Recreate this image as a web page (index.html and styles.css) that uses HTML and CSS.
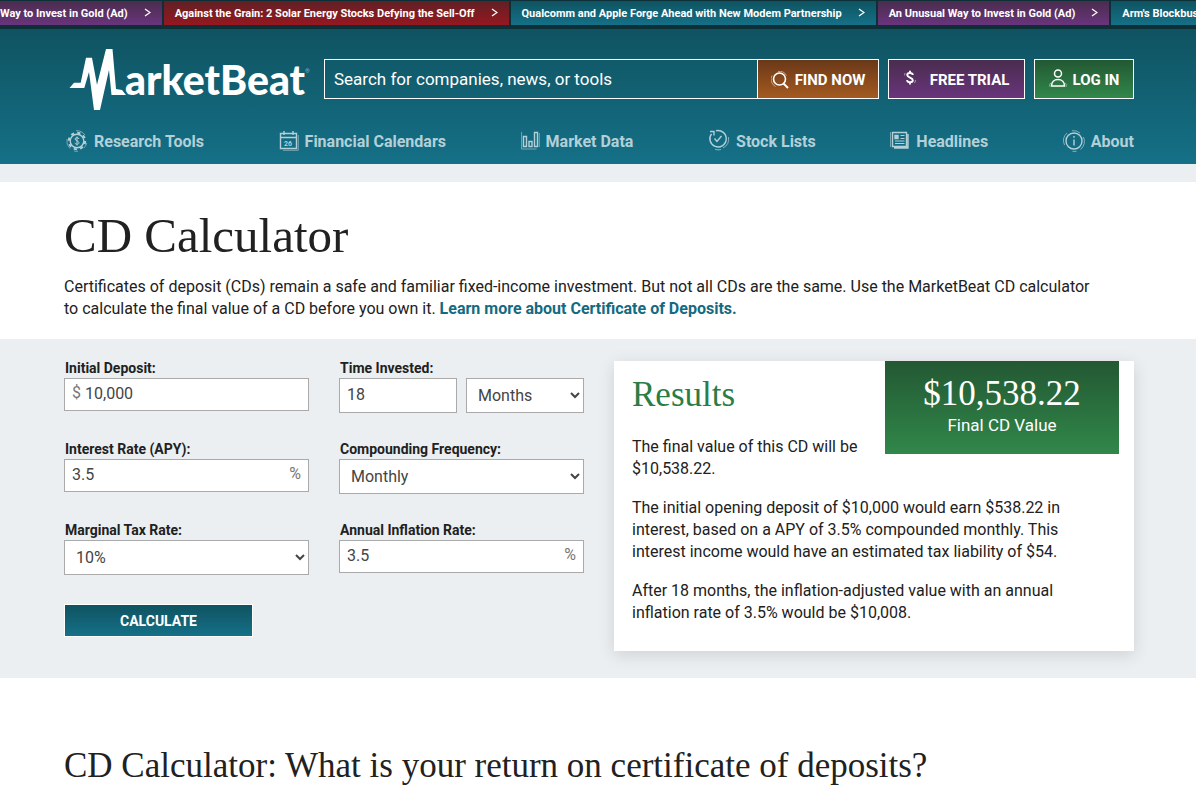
FILE: index.html
```html
<!DOCTYPE html>
<html lang="en">
<head>
<meta charset="UTF-8">
<meta name="viewport" content="width=device-width, initial-scale=1.0">
<title>CD Calculator</title>
<link rel="stylesheet" href="styles.css">
</head>
<body>

<div class="ticker">
    <a class="ticker-item purple first" href="#">Way to Invest in Gold (Ad) <svg width="7" height="9" viewBox="0 0 7 9"><path d="M1 1l5 3.5L1 8"/></svg></a>
    <a class="ticker-item red" href="#">Against the Grain: 2 Solar Energy Stocks Defying the Sell-Off <svg width="7" height="9" viewBox="0 0 7 9"><path d="M1 1l5 3.5L1 8"/></svg></a>
    <a class="ticker-item teal" href="#">Qualcomm and Apple Forge Ahead with New Modem Partnership <svg width="7" height="9" viewBox="0 0 7 9"><path d="M1 1l5 3.5L1 8"/></svg></a>
    <a class="ticker-item purple" href="#">An Unusual Way to Invest in Gold (Ad) <svg width="7" height="9" viewBox="0 0 7 9"><path d="M1 1l5 3.5L1 8"/></svg></a>
    <a class="ticker-item teal" href="#">Arm's Blockbuster</a>
</div>

<header class="header">
    <div class="header-top">
        <a class="logo" href="#">
            <svg width="242" height="62" viewBox="0 0 242 62">
                <path fill="#fff" d="M1.500 40L6 34.700h6.700L18 9.700h6l5 27L38 1h6.500L48 41l6 1 4 5H43.500L41 22 32 62h-6L21 24l-4.700 16z"/>
                <text class="logo-text" x="57" y="47">arketBeat</text>
                <text class="logo-mark" x="237" y="25">®</text>
            </svg>
        </a>
        <form class="search">
            <input class="search-input" type="text" aria-label="Search" placeholder="Search for companies, news, or tools">
            <button class="search-button" type="button">
                <svg width="18" height="18" viewBox="0 0 18 18" fill="none" stroke="#fff"><circle cx="8.500" cy="8" r="6" stroke-width="1.600"/><path d="M12.500 12.500l4.500 4.500" stroke-width="2"/><path d="M1 4.500a8 8 0 0 0 3.500 11M7 .5a8 8 0 0 1 8.500 4" stroke-width=".7" opacity=".7"/></svg>
                FIND NOW
            </button>
        </form>
        <a class="button trial" href="#">
            <svg width="12" height="16" viewBox="0 0 12 16" fill="none" stroke="#fff"><path d="M8.800 5C8.500 2.300 3.200 2.300 3.200 5S8.800 7.500 8.800 10.200 3.400 13 3 10.200M6 .8v2.500M6 12v2.500" stroke-width="1.900"/><path d="M1 3a6 6 0 0 0-.3 2.500M11.500 10a6 6 0 0 1-1 3" stroke-width=".7" opacity=".7"/></svg>
            FREE TRIAL
        </a>
        <a class="button login" href="#">
            <svg width="18" height="19" viewBox="0 0 18 19" fill="none" stroke="#fff"><circle cx="9" cy="4.500" r="3.500" stroke-width="1.500"/><path d="M2.500 17c0-4 2.700-6.500 6.500-6.500s6.500 2.500 6.500 6.500z" stroke-width="1.500"/><path d="M.6 17.500c0-1.500.3-2.500 1-3.500M17.400 17.500c0-1.500-.3-2.500-1-3.500" stroke-width=".7" opacity=".7"/></svg>
            LOG IN
        </a>
    </div>
    <nav class="nav">
        <a class="nav-link" href="#">
            <svg width="22" height="22" viewBox="0 0 22 22"><circle cx="11" cy="11" r="6.800"/><circle cx="11" cy="11" r="8.200" stroke-width="2" stroke-dasharray="3.200 3.240"/><path d="M13 9c0-1.800-4-1.800-4 0s4 1.800 4 3.800-4 1.800-4 0M11 6.500v9" stroke-width="1"/><path d="M10 .7A10.300 10.300 0 0 1 19 5M1 9a10.300 10.300 0 0 0 3 9.500M8 21a10.300 10.300 0 0 0 4 .2M20.800 13a10 10 0 0 1-3 5" stroke-width=".6"/></svg>
            Research Tools
        </a>
        <a class="nav-link" href="#">
            <svg width="20" height="20" viewBox="0 0 20 20"><path d="M1.500 2.500h16v15h-16zM1.500 6.500h16M5 0v4M14 0v4"/><path d="M19.300 4v15.300H4" stroke-width=".6"/><text class="icon-text" x="5" y="15">26</text></svg>
            Financial Calendars
        </a>
        <a class="nav-link" href="#">
            <svg width="19" height="20" viewBox="0 0 19 20"><path d="M2.500 5.500h3v10h-3zM8 10.500h3v5H8zM13.500 1.500h3v14h-3z"/><path d="M.6 1v17h15M18.300 2v14" stroke-width=".6"/></svg>
            Market Data
        </a>
        <a class="nav-link raised" href="#">
            <svg width="22" height="22" viewBox="0 0 22 22"><path d="M8 1.800a8.200 8.200 0 1 1-4.500 3M2 2.500h4v4M6.500 9.500l2.500 3 4.500-5.500"/><path d="M20.500 8a10.500 10.500 0 0 1-5.500 11M13 20.500a9 9 0 0 1-6-.2" stroke-width=".7"/></svg>
            Stock Lists
        </a>
        <a class="nav-link" href="#">
            <svg width="20" height="20" viewBox="0 0 20 20"><path d="M2.500 1.500h14v14h-14zM18 3v14H4"/><path d="M5 4.500h3v3H5z" fill="#b3d0d8"/><path d="M10.500 4.500h4M10.500 7.500h4M5 10h9.500M5 12.500h9.500" stroke-width="1"/><path d="M.5 1v15" stroke-width=".6"/></svg>
            Headlines
        </a>
        <a class="nav-link" href="#">
            <svg width="22" height="22" viewBox="0 0 22 22"><circle cx="11" cy="11" r="8"/><path d="M11 9.500v6M11 6v1.800"/><path d="M4 3a10.500 10.500 0 0 0-2.500 12M9 .7A10.500 10.500 0 0 1 17 3M20.500 7a10.500 10.500 0 0 1-3 12.500M9.500 21.300h4" stroke-width=".7"/></svg>
            About
        </a>
    </nav>
</header>

<main>
    <section class="intro">
        <h1>CD Calculator</h1>
        <p>Certificates of deposit (CDs) remain a safe and familiar fixed-income investment. But not all CDs are the same. Use the MarketBeat CD calculator<br> to calculate the final value of a CD before you own it. <a href="#">Learn more about Certificate of Deposits.</a></p>
    </section>

    <section class="calculator">
        <form class="fields">
            <div class="field">
                <label for="deposit">Initial Deposit:</label>
                <div class="input-box">
                    <span class="unit">$</span>
                    <input id="deposit" type="text" value="10,000">
                </div>
            </div>
            <div class="field">
                <label for="time">Time Invested:</label>
                <div class="pair">
                    <input class="time-input" id="time" type="text" value="18">
                    <select aria-label="Time unit"><option>Months</option></select>
                </div>
            </div>
            <div class="field">
                <label for="rate">Interest Rate (APY):</label>
                <div class="input-box">
                    <input id="rate" type="text" value="3.5">
                    <span class="unit">%</span>
                </div>
            </div>
            <div class="field">
                <label for="frequency">Compounding Frequency:</label>
                <select id="frequency"><option>Monthly</option></select>
            </div>
            <div class="field">
                <label for="tax">Marginal Tax Rate:</label>
                <select id="tax"><option>10%</option></select>
            </div>
            <div class="field">
                <label for="inflation">Annual Inflation Rate:</label>
                <div class="input-box">
                    <input id="inflation" type="text" value="3.5">
                    <span class="unit">%</span>
                </div>
            </div>
            <button class="calculate" type="button">CALCULATE</button>
        </form>

        <div class="results">
            <div class="final-value">
                <strong>$10,538.22</strong>
                <span>Final CD Value</span>
            </div>
            <h2>Results</h2>
            <p>The final value of this CD will be $10,538.22.</p>
            <p>The initial opening deposit of $10,000 would earn $538.22 in interest, based on a APY of 3.5% compounded monthly. This interest income would have an estimated tax liability of $54.</p>
            <p>After 18 months, the inflation-adjusted value with an annual inflation rate of 3.5% would be $10,008.</p>
        </div>
    </section>

    <section class="article">
        <h2>CD Calculator: What is your return on certificate of deposits?</h2>
    </section>
</main>

</body>
</html>
```
FILE: styles.css
```css
* {
    box-sizing: border-box;
}
body {
    margin: 0;
    font-family: Roboto, "Liberation Sans", sans-serif;
    font-size: 16px;
    line-height: 22px;
    color: #212121;
    background: #fff;
    overflow-x: hidden;
}
a {
    text-decoration: none;
}
h1, h2 {
    font-family: "Liberation Serif", serif;
    font-weight: normal;
    margin: 0;
}

/* Ticker */
.ticker {
    display: flex;
    gap: 2px;
    padding: 1px 0 4px;
    background: #0c2f38;
    overflow: hidden;
}
.ticker-item {
    display: flex;
    flex: none;
    align-items: center;
    gap: 16px;
    height: 24px;
    padding: 1px 11px 0;
    font-size: 11px;
    font-weight: bold;
    color: #fff;
    white-space: nowrap;
}
.ticker-item.first {
    padding-left: 0;
}
.ticker-item svg {
    margin-bottom: 2px;
    fill: none;
    stroke: #fff;
    stroke-width: 1.3;
}
.purple, .trial {
    background: linear-gradient(#4a2d4e, #69347c);
}
.red {
    background: linear-gradient(#602125, #961720);
}
.teal, .calculate {
    background: linear-gradient(#0f5361, #157087);
}

/* Header */
.header {
    padding: 20px 62px 10px 64px;
    background: linear-gradient(#0f5361, #157087);
}
.header-top {
    display: flex;
    align-items: center;
    gap: 9px;
    height: 60px;
}
.logo {
    display: block;
    height: 62px;
    padding-left: 4px;
    margin-right: 5px;
}
.logo-text {
    font-family: Lato, sans-serif;
    font-size: 41px;
    font-weight: 900;
    fill: #fff;
}
.logo-mark {
    font-size: 6px;
    fill: #8fb5be;
}
.search {
    display: flex;
    flex: 1;
    height: 40px;
    border: 1px solid #fff;
}
.search-input {
    flex: 1;
    min-width: 0;
    padding: 0 9px;
    border: 0;
    background: transparent;
    font-family: inherit;
    font-size: 17px;
    color: #fff;
}
.search-input::placeholder {
    color: #fff;
}
.search-button, .button {
    display: flex;
    align-items: center;
    font-family: inherit;
    font-size: 15px;
    font-weight: bold;
    color: #fff;
}
.search-button {
    justify-content: center;
    gap: 6px;
    width: 121px;
    padding: 2px 0 0;
    border: 0;
    border-left: 1px solid #fff;
    background: linear-gradient(#6a3818, #a45a20);
}
.button {
    justify-content: center;
    height: 40px;
    padding-top: 2px;
    border: 1px solid #fff;
}
.button svg {
    margin-bottom: 4px;
}
.trial {
    gap: 14px;
    width: 137px;
}
.login {
    gap: 6px;
    width: 100px;
    background: linear-gradient(#235833, #31874a);
}

/* Navigation */
.nav {
    display: flex;
    justify-content: space-between;
    height: 24px;
    margin-top: 21px;
    padding-left: 2px;
}
.nav-link {
    display: flex;
    align-items: center;
    gap: 6px;
    font-weight: bold;
    color: #b3d0d8;
}
.nav-link svg {
    margin-bottom: 2px;
    fill: none;
    stroke: #b3d0d8;
    stroke-width: 1.4;
}
.nav-link.raised svg {
    margin-bottom: 4px;
}
.nav-link .icon-text {
    font-size: 7px;
    fill: #b3d0d8;
    stroke: none;
}

/* Intro */
.intro {
    padding: 24px 62px 19px 64px;
    border-top: 18px solid #ebeff2;
}
.intro h1 {
    font-size: 49px;
    line-height: 60px;
}
.intro p {
    margin: 10px 0 0;
}
.intro a {
    font-weight: bold;
    color: #126b82;
}

/* Calculator */
.calculator {
    display: grid;
    grid-template-columns: minmax(0, 1fr) minmax(0, 1fr);
    gap: 30px;
    padding: 22px 62px 27px 64px;
    background: #ebeff2;
}
.fields {
    display: grid;
    grid-template-columns: minmax(0, 1fr) minmax(0, 1fr);
    grid-template-rows: repeat(3, 81px);
    align-items: start;
    column-gap: 30px;
}
.field {
    display: flex;
    flex-direction: column;
}
.field label {
    padding: 0 0 2px 1px;
    font-size: 14px;
    font-weight: bold;
    line-height: 15px;
}
.input-box {
    display: flex;
    align-items: center;
    gap: 4px;
    height: 33px;
    padding: 0 7px 3px;
    border: 1px solid #aaa;
    background: #fff;
}
.input-box input {
    flex: 1;
    min-width: 0;
    padding: 0;
    border: 0;
}
.field input, .field select {
    font-family: inherit;
    font-size: 16px;
    color: #444;
    background-color: #fff;
}
.unit {
    color: #777;
}
.pair {
    display: grid;
    grid-template-columns: minmax(0, 1fr) minmax(0, 1fr);
    gap: 9px;
}
.time-input {
    width: 100%;
    height: 35px;
    padding: 0 7px 2px;
    border: 1px solid #aaa;
}
.field select {
    width: 100%;
    height: 35px;
    padding: 0 0 0 7px;
    border: 1px solid #aaa;
    border-radius: 0;
}
.calculate {
    width: 189px;
    height: 33px;
    border: 1px solid #fff;
    font-family: inherit;
    font-size: 14px;
    font-weight: bold;
    color: #fff;
}

/* Results */
.results {
    padding: 0 15px 27px 18px;
    background: #fff;
    box-shadow: 0 4px 16px rgba(0, 0, 0, 0.12);
}
.results h2 {
    padding-top: 12px;
    margin-bottom: 19px;
    font-size: 35px;
    line-height: 44px;
    color: #2a7d45;
}
.results p {
    max-width: 460px;
    margin: 0 0 17px;
}
.results p:last-child {
    margin-bottom: 0;
}
.final-value {
    float: right;
    display: flex;
    flex-direction: column;
    align-items: center;
    width: 234px;
    height: 93px;
    padding-top: 12px;
    margin-left: 15px;
    background: linear-gradient(#235833, #31874a);
    font-size: 17px;
    color: #fff;
}
.final-value strong {
    font-family: "Liberation Serif", serif;
    font-size: 35px;
    font-weight: normal;
    line-height: 41px;
}

/* Article */
.article {
    padding: 66px 62px 0 64px;
}
.article h2 {
    font-size: 35px;
    line-height: 44px;
}
```
